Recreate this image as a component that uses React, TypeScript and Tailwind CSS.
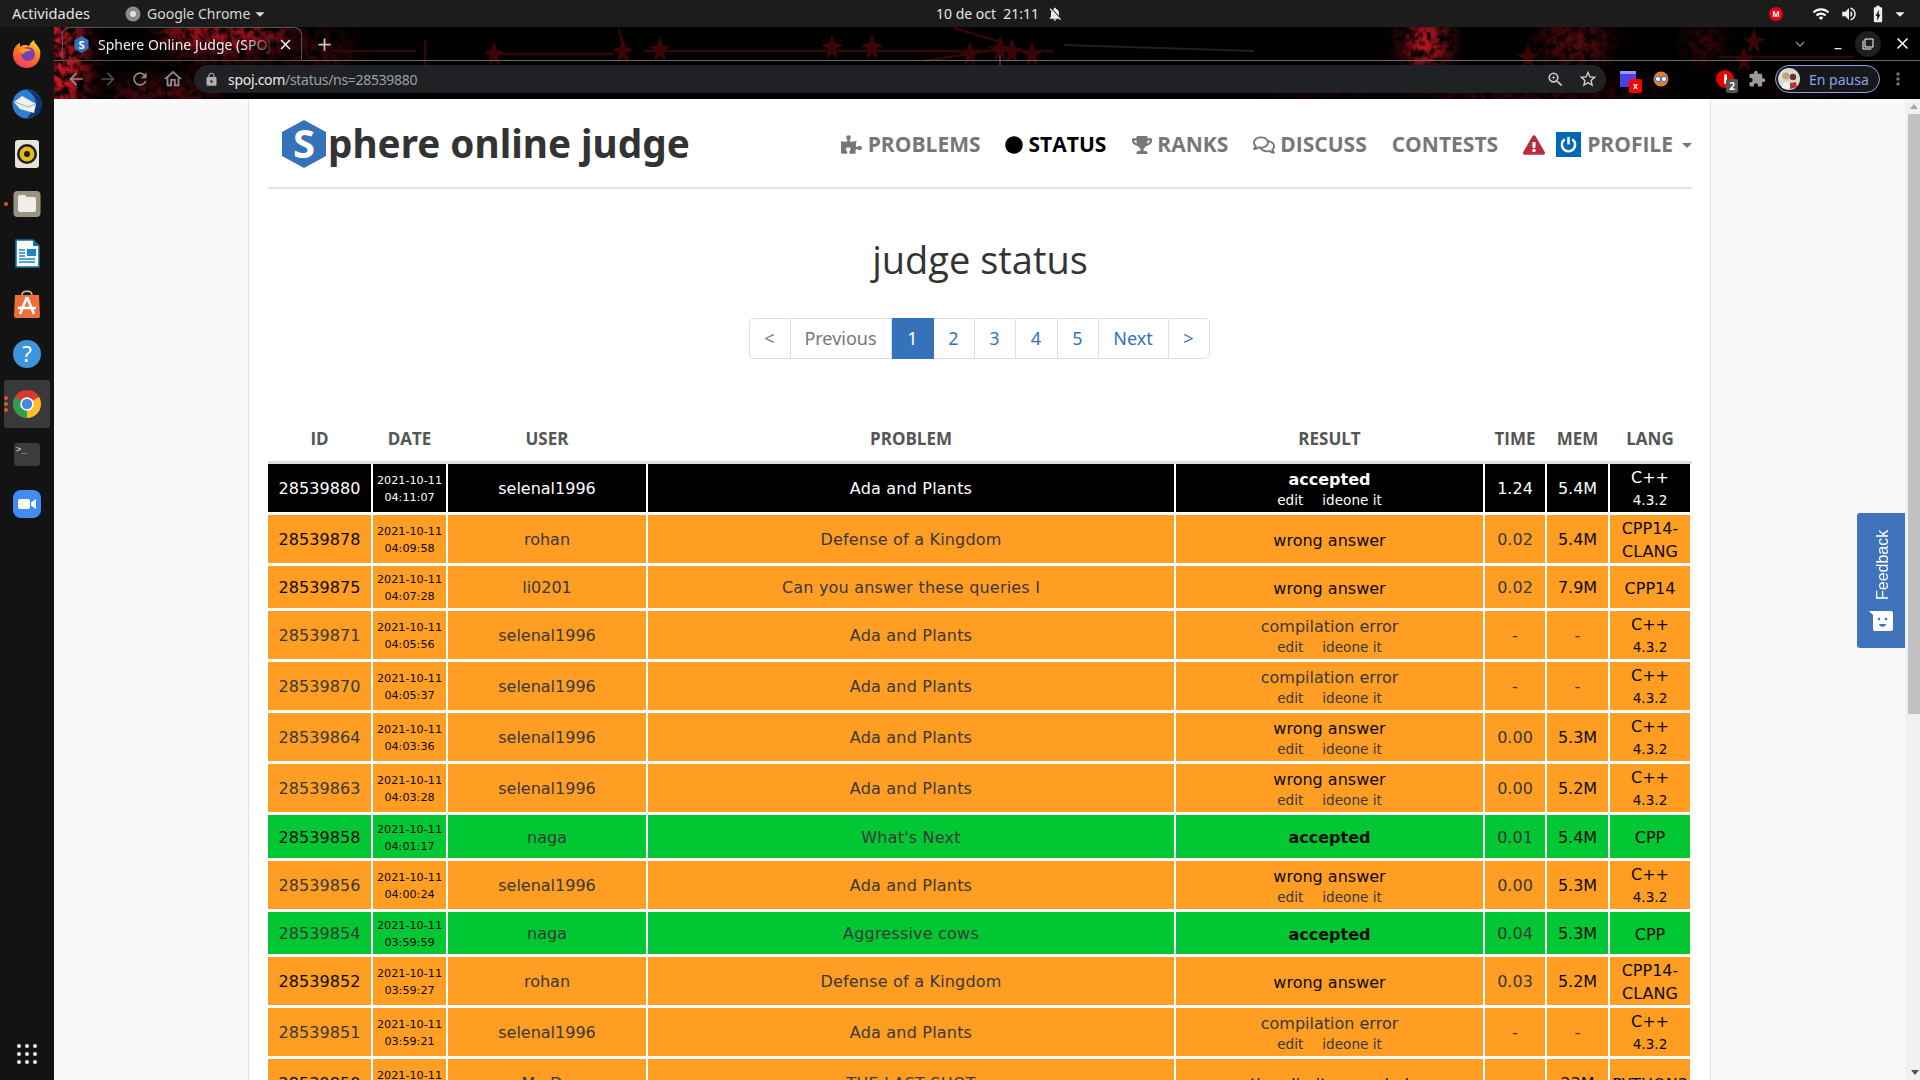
import React from "react";
import { FaPuzzlePiece, FaCircle, FaTrophy, FaRegComments, FaExclamationTriangle } from "react-icons/fa";
import {
  MdArrowBack, MdArrowForward, MdRefresh, MdOutlineHome, MdLock, MdZoomIn, MdStarBorder, MdExtension,
  MdMoreVert, MdClose, MdAdd, MdExpandMore, MdWifi, MdVolumeUp, MdBatteryChargingFull, MdArrowDropDown,
  MdNotificationsOff, MdMinimize, MdFilterNone,
} from "react-icons/md";

type Row = {
  id: string; date: string; time: string; user: string; problem: string; result: string; links?: boolean;
  t: string; mem: string; lang: string; ver?: string; lang2?: string; kind: "me" | "o" | "g"; dark?: boolean; bold?: boolean; resDark?: boolean; h: string;
};

const rows: Row[] = [
  { id: "28539880", date: "2021-10-11", time: "04:11:07", user: "selenal1996", problem: "Ada and Plants", result: "accepted", links: true, t: "1.24", mem: "5.4M", lang: "C++", ver: "4.3.2", kind: "me", bold: true, h: "h-[51px]" },
  { id: "28539878", date: "2021-10-11", time: "04:09:58", user: "rohan", problem: "Defense of a Kingdom", result: "wrong answer", t: "0.02", mem: "5.4M", lang: "CPP14-", lang2: "CLANG", kind: "o", dark: true, resDark: true, h: "h-[51px]" },
  { id: "28539875", date: "2021-10-11", time: "04:07:28", user: "li0201", problem: "Can you answer these queries I", result: "wrong answer", t: "0.02", mem: "7.9M", lang: "CPP14", kind: "o", dark: true, resDark: true, h: "h-[45px]" },
  { id: "28539871", date: "2021-10-11", time: "04:05:56", user: "selenal1996", problem: "Ada and Plants", result: "compilation error", links: true, t: "-", mem: "-", lang: "C++", ver: "4.3.2", kind: "o", h: "h-[51px]" },
  { id: "28539870", date: "2021-10-11", time: "04:05:37", user: "selenal1996", problem: "Ada and Plants", result: "compilation error", links: true, t: "-", mem: "-", lang: "C++", ver: "4.3.2", kind: "o", h: "h-[51px]" },
  { id: "28539864", date: "2021-10-11", time: "04:03:36", user: "selenal1996", problem: "Ada and Plants", result: "wrong answer", links: true, t: "0.00", mem: "5.3M", lang: "C++", ver: "4.3.2", kind: "o", resDark: true, h: "h-[51px]" },
  { id: "28539863", date: "2021-10-11", time: "04:03:28", user: "selenal1996", problem: "Ada and Plants", result: "wrong answer", links: true, t: "0.00", mem: "5.2M", lang: "C++", ver: "4.3.2", kind: "o", resDark: true, h: "h-[51px]" },
  { id: "28539858", date: "2021-10-11", time: "04:01:17", user: "naga", problem: "What's Next", result: "accepted", t: "0.01", mem: "5.4M", lang: "CPP", kind: "g", dark: true, bold: true, resDark: true, h: "h-[46px]" },
  { id: "28539856", date: "2021-10-11", time: "04:00:24", user: "selenal1996", problem: "Ada and Plants", result: "wrong answer", links: true, t: "0.00", mem: "5.3M", lang: "C++", ver: "4.3.2", kind: "o", resDark: true, h: "h-[51px]" },
  { id: "28539854", date: "2021-10-11", time: "03:59:59", user: "naga", problem: "Aggressive cows", result: "accepted", t: "0.04", mem: "5.3M", lang: "CPP", kind: "g", bold: true, resDark: true, h: "h-[45px]" },
  { id: "28539852", date: "2021-10-11", time: "03:59:27", user: "rohan", problem: "Defense of a Kingdom", result: "wrong answer", t: "0.03", mem: "5.2M", lang: "CPP14-", lang2: "CLANG", kind: "o", dark: true, resDark: true, h: "h-[51px]" },
  { id: "28539851", date: "2021-10-11", time: "03:59:21", user: "selenal1996", problem: "Ada and Plants", result: "compilation error", links: true, t: "-", mem: "-", lang: "C++", ver: "4.3.2", kind: "o", h: "h-[51px]" },
  { id: "28539850", date: "2021-10-11", time: "03:58:40", user: "My Du", problem: "THE LAST SHOT", result: "time limit exceeded", t: "-", mem: "23M", lang: "PYTHON3", kind: "o", dark: true, resDark: true, h: "h-[51px]" },
];

function ChromeTexture() {
  return (
    <svg className="absolute inset-0 w-full h-full" viewBox="0 0 1866 72" preserveAspectRatio="none">
      <defs>
        <filter id="noise" x="0" y="0" width="100%" height="100%">
          <feTurbulence type="fractalNoise" baseFrequency="0.13" numOctaves="4" seed="4" />
          <feColorMatrix type="matrix" values="0 0 0 0 0.62  0 0 0 0 0.01  0 0 0 0 0.02  2.8 0 0 0 -0.75" />
        </filter>
        <filter id="soft"><feGaussianBlur stdDeviation="12" /></filter>
        <mask id="blobs">
          <g filter="url(#soft)" fill="#fff">
            <ellipse cx="6" cy="30" rx="26" ry="60" />
            <ellipse cx="170" cy="6" rx="66" ry="20" />
            <ellipse cx="110" cy="68" rx="60" ry="12" opacity="0.5" />
            <ellipse cx="265" cy="24" rx="36" ry="14" opacity="0.35" />
            <ellipse cx="1372" cy="16" rx="20" ry="28" />
            <ellipse cx="1520" cy="16" rx="36" ry="20" opacity="0.45" />
            <ellipse cx="1268" cy="70" rx="60" ry="4" opacity="0.4" />
            <ellipse cx="1650" cy="16" rx="14" ry="16" opacity="0.45" />
            <ellipse cx="1480" cy="70" rx="140" ry="5" opacity="0.6" />
            <ellipse cx="1750" cy="70" rx="40" ry="5" opacity="0.4" />
          </g>
        </mask>
      </defs>
      <rect width="1866" height="72" fill="#000" />
      <g mask="url(#blobs)"><rect width="1866" height="72" filter="url(#noise)" /></g>
      <g stroke="#330607" strokeWidth="2.5" fill="none">
        <path d="M276 24H362M436 27H560M590 24H1000M340 40H940M565 2L572 34M371 13V40" />
        <path d="M900 1L950 16M870 34L960 20" />
        <path d="M1010 18L1200 24" stroke="#2a1c1c" strokeWidth="2" />
        <path d="M946 20V44" stroke="#4a2a2c" strokeWidth="2" />
        <path d="M1665 30L1800 30" />
      </g>
      <g fill="#3a0506">
        {[[440, 27], [569, 24], [606, 22], [778, 20], [818, 20], [916, 27], [946, 22], [958, 24], [978, 27], [1474, 30], [1690, 32], [1700, 14]].map(([x, y], i) => (
          <path key={i} d={`M${x} ${y - 13}L${x + 3} ${y - 4}L${x + 11} ${y - 2}L${x + 4} ${y + 2}L${x + 6} ${y + 13}L${x} ${y + 6}L${x - 6} ${y + 13}L${x - 4} ${y + 2}L${x - 11} ${y - 2}L${x - 3} ${y - 4}Z`} />
        ))}
      </g>
    </svg>
  );
}

function DockItem({ children, active, dots = 0 }: { children: React.ReactNode; active?: boolean; dots?: number }) {
  return (
    <div className="w-full h-[50px] flex items-center justify-center relative">
      {active && <div className="absolute left-[4px] right-[4px] top-[1px] bottom-[1px] rounded-[3px] bg-[#393939]" />}
      {dots > 0 && (
        <div className="absolute left-[4px] top-0 bottom-0 flex flex-col justify-center gap-[2px]">
          {Array.from({ length: dots }).map((_, i) => <span key={i} className="w-[4px] h-[4px] rounded-full bg-[#e95420]" />)}
        </div>
      )}
      <div className="relative">{children}</div>
    </div>
  );
}

function Dock() {
  const sz = "w-[30px] h-[30px]";
  return (
    <div className="w-[54px] shrink-0 bg-[#131313] flex flex-col items-center relative">
      <div className="h-[2px]" />
      <div className="flex flex-col items-center w-full">
        <DockItem><svg viewBox="0 0 30 30" className={sz}><defs><linearGradient id="ff" x1="0.7" y1="0" x2="0.2" y2="1"><stop offset="0" stopColor="#ffd230" /><stop offset="0.45" stopColor="#ff7a1a" /><stop offset="1" stopColor="#f0326e" /></linearGradient></defs><path d="M1 16C1 9 5 5 8 4L8 8C11 5 15 6 17 7C18 5 19 3 22 1C22 4 26 6 28 11C30 20 24 29 15 29C7 29 1 23 1 16Z" fill="url(#ff)" /><circle cx="16" cy="15" r="7" fill="#7a3fb8" /><path d="M7 11C11 8 17 9 20 12C16 11 13 13 11 15C9 14 8 13 7 11Z" fill="#ff9a20" /></svg></DockItem>
        <DockItem><svg viewBox="0 0 30 30" className={sz}><circle cx="15" cy="15" r="14.5" fill="#2f7fd0" /><path d="M15 1C24 1 30 8 30 15C30 24 24 29 15 29L22 20C27 14 22 5 15 1Z" fill="#12356e" /><path d="M2 13L10 7L24 15L22 24L8 20Z" fill="#f0f0f0" /><path d="M3 13L16 18L24 15" stroke="#aaa" fill="none" /></svg></DockItem>
        <DockItem><svg viewBox="0 0 30 30" className={sz}><rect x="3" y="1" width="24" height="28" rx="3" fill="#e7e3d6" /><circle cx="15" cy="15" r="10" fill="#1c1c1c" /><circle cx="15" cy="15" r="7.5" fill="#e6b71e" /><circle cx="15" cy="15" r="3" fill="#1c1c1c" /></svg></DockItem>
        <DockItem dots={1}><svg viewBox="0 0 30 30" className={sz}><rect x="1.5" y="2" width="27" height="26" rx="4" fill="#99937f" /><path d="M6 8a2 2 0 0 1 2-2h5l2 2h7a2 2 0 0 1 2 2v11a2 2 0 0 1-2 2H8a2 2 0 0 1-2-2Z" fill="#f0eeea" /></svg></DockItem>
        <DockItem><svg viewBox="0 0 30 30" className={sz}><path d="M4 1H21L27 7V28H4Z" fill="#f5f8fa" stroke="#1b6f9c" strokeWidth="1.6" /><path d="M21 1L27 7H21Z" fill="#1b6f9c" /><rect x="15" y="10" width="9" height="7" fill="#1b86c4" /><path d="M7 11H13M7 14H13M7 17H13M7 20H23M7 23H23" stroke="#1b86c4" strokeWidth="1.6" /></svg></DockItem>
        <DockItem><svg viewBox="0 0 30 30" className={sz}><path d="M3 6H27L28 27a2 2 0 0 1-2 2H4a2 2 0 0 1-2-2Z" fill="#ee6f3a" /><path d="M10 6C10 1 20 1 20 6" fill="none" stroke="#d9c7a8" strokeWidth="1.5" /><path d="M15 8L8 25M15 8L22 25M6 19H24" stroke="#fff" strokeWidth="2.6" fill="none" /></svg></DockItem>
        <DockItem><svg viewBox="0 0 30 30" className={sz}><circle cx="15" cy="15" r="14" fill="#3b94dc" /><text x="15" y="23" fontSize="22" fill="#fff" textAnchor="middle" fontFamily="Noto Sans, sans-serif">?</text></svg></DockItem>
        <DockItem active dots={3}><svg viewBox="0 0 30 30" className={sz}><circle cx="15" cy="15" r="14" fill="#d93a2e" /><path d="M15 15L27.1 8A14 14 0 0 1 15 29Z" fill="#fbc02d" /><path d="M15 15L15 29A14 14 0 0 1 2.9 8Z" fill="#2e9e4f" /><circle cx="15" cy="15" r="6.8" fill="#fff" /><circle cx="15" cy="15" r="5.2" fill="#4a86e8" /></svg></DockItem>
        <DockItem><svg viewBox="0 0 30 30" className={sz}><rect x="2" y="4" width="26" height="23" rx="3" fill="#3c3c3c" /><text x="4" y="13" fontSize="9" fill="#ddd" fontFamily="DejaVu Sans Mono, monospace">&gt;_</text></svg></DockItem>
        <DockItem><svg viewBox="0 0 30 30" className={sz}><rect x="1" y="1" width="28" height="28" rx="8" fill="#3f8cf5" /><rect x="6" y="10" width="12" height="10" rx="2" fill="#fff" /><path d="M19 13.5L24 10V20L19 16.5Z" fill="#fff" /></svg></DockItem>
      </div>
      <div className="absolute bottom-[16px] grid grid-cols-3 gap-[4px]">
        {Array.from({ length: 9 }).map((_, i) => <span key={i} className="w-[4px] h-[4px] rounded-full bg-[#eee]" />)}
      </div>
    </div>
  );
}

function TopBar() {
  return (
    <div className="h-[27px] shrink-0 bg-[#1c1c1c] flex items-center text-[14px] text-[#e6e6e6] font-['Noto_Sans',sans-serif] relative">
      <span className="ml-[12px] w-[78px] text-[14.6px] whitespace-nowrap">Actividades</span>
      <svg viewBox="0 0 16 16" className="w-[16px] h-[16px] ml-[35px]"><circle cx="8" cy="8" r="7.5" fill="#8b8b8b" /><circle cx="8" cy="8" r="3" fill="#e0e0e0" /></svg>
      <span className="ml-[6px] whitespace-nowrap text-[#d8d8d8]">Google Chrome</span>
      <MdArrowDropDown className="text-[22px] text-[#ddd] -ml-[1px]" />
      <div className="absolute left-[936px] flex items-center whitespace-nowrap">
        <span>10 de oct&nbsp; 21:11</span>
        <MdNotificationsOff className="ml-[8px] text-[16px] text-[#eee]" />
      </div>
      <div className="ml-auto flex items-center">
        <span className="w-[14px] h-[14px] rounded-full bg-[#e60012] text-white text-[8px] font-bold flex items-center justify-center">M</span>
        <MdWifi className="ml-[29px] text-[18px] text-white" />
        <MdVolumeUp className="ml-[10px] text-[18px] text-[#eee]" />
        <MdBatteryChargingFull className="ml-[10px] text-[20px] text-[#eee]" />
        <MdArrowDropDown className="ml-[1px] mr-[9px] text-[22px] text-[#eee]" />
      </div>
    </div>
  );
}

function Chrome() {
  return (
    <div className="h-[72px] shrink-0 relative bg-black font-['Noto_Sans',sans-serif]">
      <ChromeTexture />
      <div className="relative h-[34px] flex border-b border-[#6a6a6a]">
        <div className="ml-[8px] w-[240px] h-[34px] -mb-[1px] rounded-t-[8px] border border-b-0 border-[#555] flex items-center pl-[11px] pr-[7px] bg-[#00000033] text-[14px] text-[#f0f0f0]">
          <svg viewBox="0 0 16 18" className="w-[15px] h-[17px] shrink-0"><path d="M8 0L15.5 4.5V13.5L8 18L0.5 13.5V4.5Z" fill="#3572b9" /><text x="8" y="13.5" fontSize="12" fontWeight="700" fill="#fff" textAnchor="middle" fontFamily="Open Sans, sans-serif">S</text></svg>
          <span className="ml-[9px] flex-1 overflow-hidden whitespace-nowrap [mask-image:linear-gradient(to_right,#000_82%,transparent)]">Sphere Online Judge (SPOJ)</span>
          <MdClose className="ml-[2px] text-[17px] text-white" />
        </div>
        <MdAdd className="ml-[12px] mt-[7px] text-[21px] text-[#c8c8c8]" />
        <div className="ml-auto flex items-center text-[#c8c8c8]">
          <MdExpandMore className="text-[18px] text-[#888]" />
          <MdMinimize className="ml-[22px] text-[14px] text-white" />
          <div className="ml-[10px] w-[26px] h-[26px] rounded-full bg-[#1f1f1f] flex items-center justify-center"><MdFilterNone className="text-[12px] text-white" /></div>
          <MdClose className="ml-[12px] mr-[8px] text-[19px] text-white" />
        </div>
      </div>
      <div className="relative h-[38px] flex items-start pt-[4px]">
        <div className="w-[140px] h-[28px] flex items-center pl-[12px] gap-[12px] text-[20px]">
          <MdArrowBack className="text-[#8f8f8f]" />
          <MdArrowForward className="text-[#4f4f4f]" />
          <MdRefresh className="text-[#8a8a8a]" />
          <MdOutlineHome className="text-[#8a8a8a] text-[22px]" />
        </div>
        <div className="w-[1412px] h-[28px] rounded-full bg-[#202124] flex items-center pl-[10px] pr-[8px] text-[14px]">
          <MdLock className="text-[15px] text-[#b0b0b0]" />
          <span className="ml-[9px] text-[#eaeaea] whitespace-nowrap tracking-[-0.3px]">spoj.com<span className="text-[#9aa0a6]">/status/ns=28539880</span></span>
          <MdZoomIn className="ml-auto text-[19px] text-[#c8c8c8]" />
          <MdStarBorder className="ml-[13px] text-[20px] text-[#d0d0d0]" />
        </div>
        <div className="flex-1 h-[28px] flex items-center relative">
          <div className="absolute left-[14px] top-[6px] w-[16px] h-[16px] bg-[#4a42e8] border-t-[3px] border-[#9c98f0]" />
          <div className="absolute left-[23px] top-[14px] w-[13px] h-[14px] bg-[#f00] text-white text-[8px] font-bold flex items-center justify-center rounded-[2px]">x</div>
          <svg viewBox="0 0 16 16" className="absolute left-[47px] top-[6px] w-[16px] h-[16px]"><circle cx="8" cy="8" r="7.5" fill="#d87f3a" /><circle cx="5" cy="8" r="2.6" fill="#fff" stroke="#2b6cc4" /><circle cx="11" cy="8" r="2.6" fill="#fff" stroke="#2b6cc4" /></svg>
          <div className="absolute left-[110px] top-[5px] w-[18px] h-[18px] bg-[#e60000] rounded-full flex items-center justify-center"><span className="w-[3px] h-[10px] bg-white rounded-sm" /></div>
          <div className="absolute left-[120px] top-[14px] w-[12px] h-[14px] bg-[#555] rounded-[2px] text-white text-[10px] font-bold flex items-center justify-center">2</div>
          <MdExtension className="absolute left-[142px] top-[5px] text-[18px] text-[#9a9a9a]" />
          <div className="absolute left-[169px] top-0 w-[105px] h-[28px] rounded-full border border-[#8aa3e8] bg-[#18181c] flex items-center">
            <svg viewBox="0 0 22 22" className="ml-[2px] w-[22px] h-[22px]"><circle cx="11" cy="11" r="11" fill="#d8dcd0" /><circle cx="8" cy="8" r="3.6" fill="#c89a80" /><circle cx="15" cy="9" r="3.2" fill="#6b3028" /><path d="M4 20C4 14 10 12 12 16L12 21Z" fill="#f0f0f0" /><path d="M12 21V15L18 14L19 19Z" fill="#c03030" /></svg>
            <span className="ml-[9px] text-[14px] text-[#8aa3e8] whitespace-nowrap">En pausa</span>
          </div>
          <MdMoreVert className="absolute right-[12px] top-[4px] text-[20px] text-[#777]" />
        </div>
      </div>
    </div>
  );
}

function Nav() {
  const item = "flex items-center whitespace-nowrap";
  return (
    <div className="h-[90px] shrink-0 border-b-2 border-[#e2e4e4] flex items-center relative">
      <svg viewBox="0 0 44 48" className="ml-[14px] w-[44px] h-[48px] shrink-0 mt-[2px]"><path d="M22 0L44 12V36L22 48L0 36V12Z" fill="#3572b9" /><text x="22" y="38" fontSize="40" fontWeight="700" fill="#fff" textAnchor="middle" fontFamily="Open Sans, sans-serif">S</text></svg>
      <span className="ml-[2px] text-[38.7px] leading-none font-bold text-[#333] font-['Noto_Sans',sans-serif] whitespace-nowrap mt-[1px]">phere online judge</span>
      <div className="ml-auto flex items-center text-[21px] font-bold text-[#777] font-['Open_Sans',sans-serif] mt-[3px] -mr-[3px]">
        <div className={item}><FaPuzzlePiece className="text-[21px] mr-[6px]" />PROBLEMS</div>
        <div className={item + " ml-[24px] text-black"}><FaCircle className="text-[18px] mr-[6px]" />STATUS</div>
        <div className={item + " ml-[26px]"}><FaTrophy className="text-[20px] mr-[5px]" />RANKS</div>
        <div className={item + " ml-[25px]"}><FaRegComments className="text-[22px] mr-[5px]" />DISCUSS</div>
        <div className={item + " ml-[25px]"}>CONTESTS</div>
        <FaExclamationTriangle className="ml-[25px] text-[22px] text-[#b92c3f]" />
        <div className="ml-[11px] w-[25px] h-[25px] bg-[#0068b5] flex items-center justify-center">
          <svg viewBox="0 0 20 20" className="w-[19px] h-[19px]"><path d="M6 4.5a7 7 0 1 0 8 0" fill="none" stroke="#fff" strokeWidth="2.6" /><path d="M10 2V10" stroke="#fff" strokeWidth="2.6" /></svg>
        </div>
        <div className={item + " ml-[6px]"}>PROFILE</div>
        <MdArrowDropDown className="text-[24px] ml-[2px] -mr-[4px]" />
      </div>
    </div>
  );
}

function Pager() {
  const base = "h-[41px] flex items-center justify-center border-y border-r border-[#ddd] text-[18px]";
  return (
    <div className="flex justify-center font-['Noto_Sans',sans-serif] mr-[2px]">
      <div className={base + " w-[42px] border-l rounded-l-[5px] text-[#777]"}>&lt;</div>
      <div className={base + " w-[101px] text-[#777]"}>Previous</div>
      <div className="h-[41px] w-[42px] flex items-center justify-center text-[18px] bg-[#3572b9] text-white">1</div>
      {[["2", "w-[41px]"], ["3", "w-[41px]"], ["4", "w-[42px]"], ["5", "w-[41px]"], ["Next", "w-[70px]"]].map(([t, w]) => (
        <div key={t} className={base + " " + w + " text-[#3572b9]"}>{t}</div>
      ))}
      <div className={base + " w-[41px] rounded-r-[5px] text-[#3572b9]"}>&gt;</div>
    </div>
  );
}

function StatusRow({ r }: { r: Row }) {
  const bg = r.kind === "me" ? "bg-black" : r.kind === "o" ? "bg-[#ff9e23]" : "bg-[#00c732]";
  const soft = r.kind === "me" ? "text-white" : "text-[#383838]";
  const hard = r.kind === "me" ? "text-white" : "text-[#0a0a0a]";
  const td = "p-0 pt-[2px] text-center align-middle border-b-[3px] border-r-2 border-white " + bg + " " + r.h;
  const memSoft = r.mem === "-";
  return (
    <tr>
      <td className={td + " text-[16px] tracking-[0.1px] " + (r.dark ? hard : soft)}>{r.id}</td>
      <td className={td + " text-[11.2px] leading-[17px] " + hard}><div>{r.date}</div><div>{r.time}</div></td>
      <td className={td + " text-[16px] " + soft}>{r.user}</td>
      <td className={td + " text-[16px] tracking-[0.2px] " + soft}>{r.problem}</td>
      <td className={td + " " + (r.resDark ? hard : soft)}>
        <div className={"text-[16px] leading-[21px] " + (r.bold ? "font-bold" : "")}>{r.result}</div>
        {r.links && (
          <div className={"text-[13.6px] leading-[20px] flex justify-center gap-[19px] " + soft}><span>edit</span><span>ideone it</span></div>
        )}
      </td>
      <td className={td + " text-[16px] " + soft}>{r.t}</td>
      <td className={td + " text-[16px] " + (memSoft ? soft : hard)}>{r.mem}</td>
      <td className={td + " border-r-0 text-[16px] leading-[23px] whitespace-nowrap " + hard}>
        <div>{r.lang}</div>
        {r.lang2 && <div>{r.lang2}</div>}
        {r.ver && <div className="text-[13.6px]">{r.ver}</div>}
      </td>
    </tr>
  );
}

function StatusTable() {
  const th = "p-0 pt-[1px] pr-[2px] h-[39px] align-top text-[17px] font-bold text-[#555] font-['Open_Sans',sans-serif] border-b-[3px] border-[#ddd] text-center";
  return (
    <table className="w-full table-fixed border-separate border-spacing-0 font-['DejaVu_Sans',sans-serif]">
      <colgroup>
        <col className="w-[105px]" /><col className="w-[75px]" /><col className="w-[200px]" /><col className="w-[528px]" />
        <col className="w-[309px]" /><col className="w-[62px]" /><col className="w-[63px]" /><col className="w-[82px]" />
      </colgroup>
      <thead>
        <tr>
          {["ID", "DATE", "USER", "PROBLEM", "RESULT", "TIME", "MEM", "LANG"].map((h) => <th key={h} className={th}>{h}</th>)}
        </tr>
      </thead>
      <tbody>{rows.map((r) => <StatusRow key={r.id} r={r} />)}</tbody>
    </table>
  );
}

function Page() {
  return (
    <div className="flex-1 min-h-0 flex overflow-hidden">
      <div className="flex-1 bg-[#f9f9f9] flex justify-center overflow-hidden relative">
        <div className="w-[1463px] bg-white border-x border-[#e4e4e4] pl-[19px] pr-[18px]">
          <Nav />
          <h1 className="mt-[45px] h-[50px] flex items-center justify-center text-[38px] font-normal text-[#333] font-['Open_Sans',sans-serif] leading-none">judge status</h1>
          <div className="mt-[34px]"><Pager /></div>
          <div className="mt-[66px]"><StatusTable /></div>
        </div>
        <div className="absolute right-0 top-[414px] w-[48px] h-[135px] bg-[#3f74bc] rounded-l-[3px] flex flex-col items-center">
          <span className="mt-[17px] ml-[3px] h-[70px] flex items-center justify-center text-[16px] text-white font-['Liberation_Sans',sans-serif] [writing-mode:vertical-rl] rotate-180">Feedback</span>
          <svg viewBox="0 0 24 20" className="mt-[11px] w-[24px] h-[20px]"><path d="M0 0H22a2 2 0 0 1 2 2V18a2 2 0 0 1-2 2H6a2 2 0 0 1-2-2V4Z" fill="#fff" /><circle cx="10" cy="8" r="1.3" fill="#3f74bc" /><circle cx="17" cy="8" r="1.3" fill="#3f74bc" /><path d="M10 13a3.6 3.6 0 0 0 7 0Z" fill="#3f74bc" /></svg>
        </div>
      </div>
      <div className="w-[15px] shrink-0 bg-[#f1f1f1] flex flex-col items-center relative">
        <div className="mt-[5px] w-0 h-0 border-x-[4px] border-x-transparent border-b-[5px] border-b-[#a3a3a3] ml-[3px]" />
        <div className="mt-[5px] ml-[3px] w-[12px] h-[600px] bg-[#c1c1c1]" />
        <div className="absolute bottom-[5px] left-[6px] w-0 h-0 border-x-[4px] border-x-transparent border-t-[5px] border-t-[#505050]" />
      </div>
    </div>
  );
}

export default function App() {
  return (
    <div className="w-screen h-screen overflow-hidden flex flex-col bg-[#131313]">
      <TopBar />
      <div className="flex-1 min-h-0 flex">
        <Dock />
        <div className="flex-1 min-w-0 flex flex-col">
          <Chrome />
          <Page />
        </div>
      </div>
    </div>
  );
}
